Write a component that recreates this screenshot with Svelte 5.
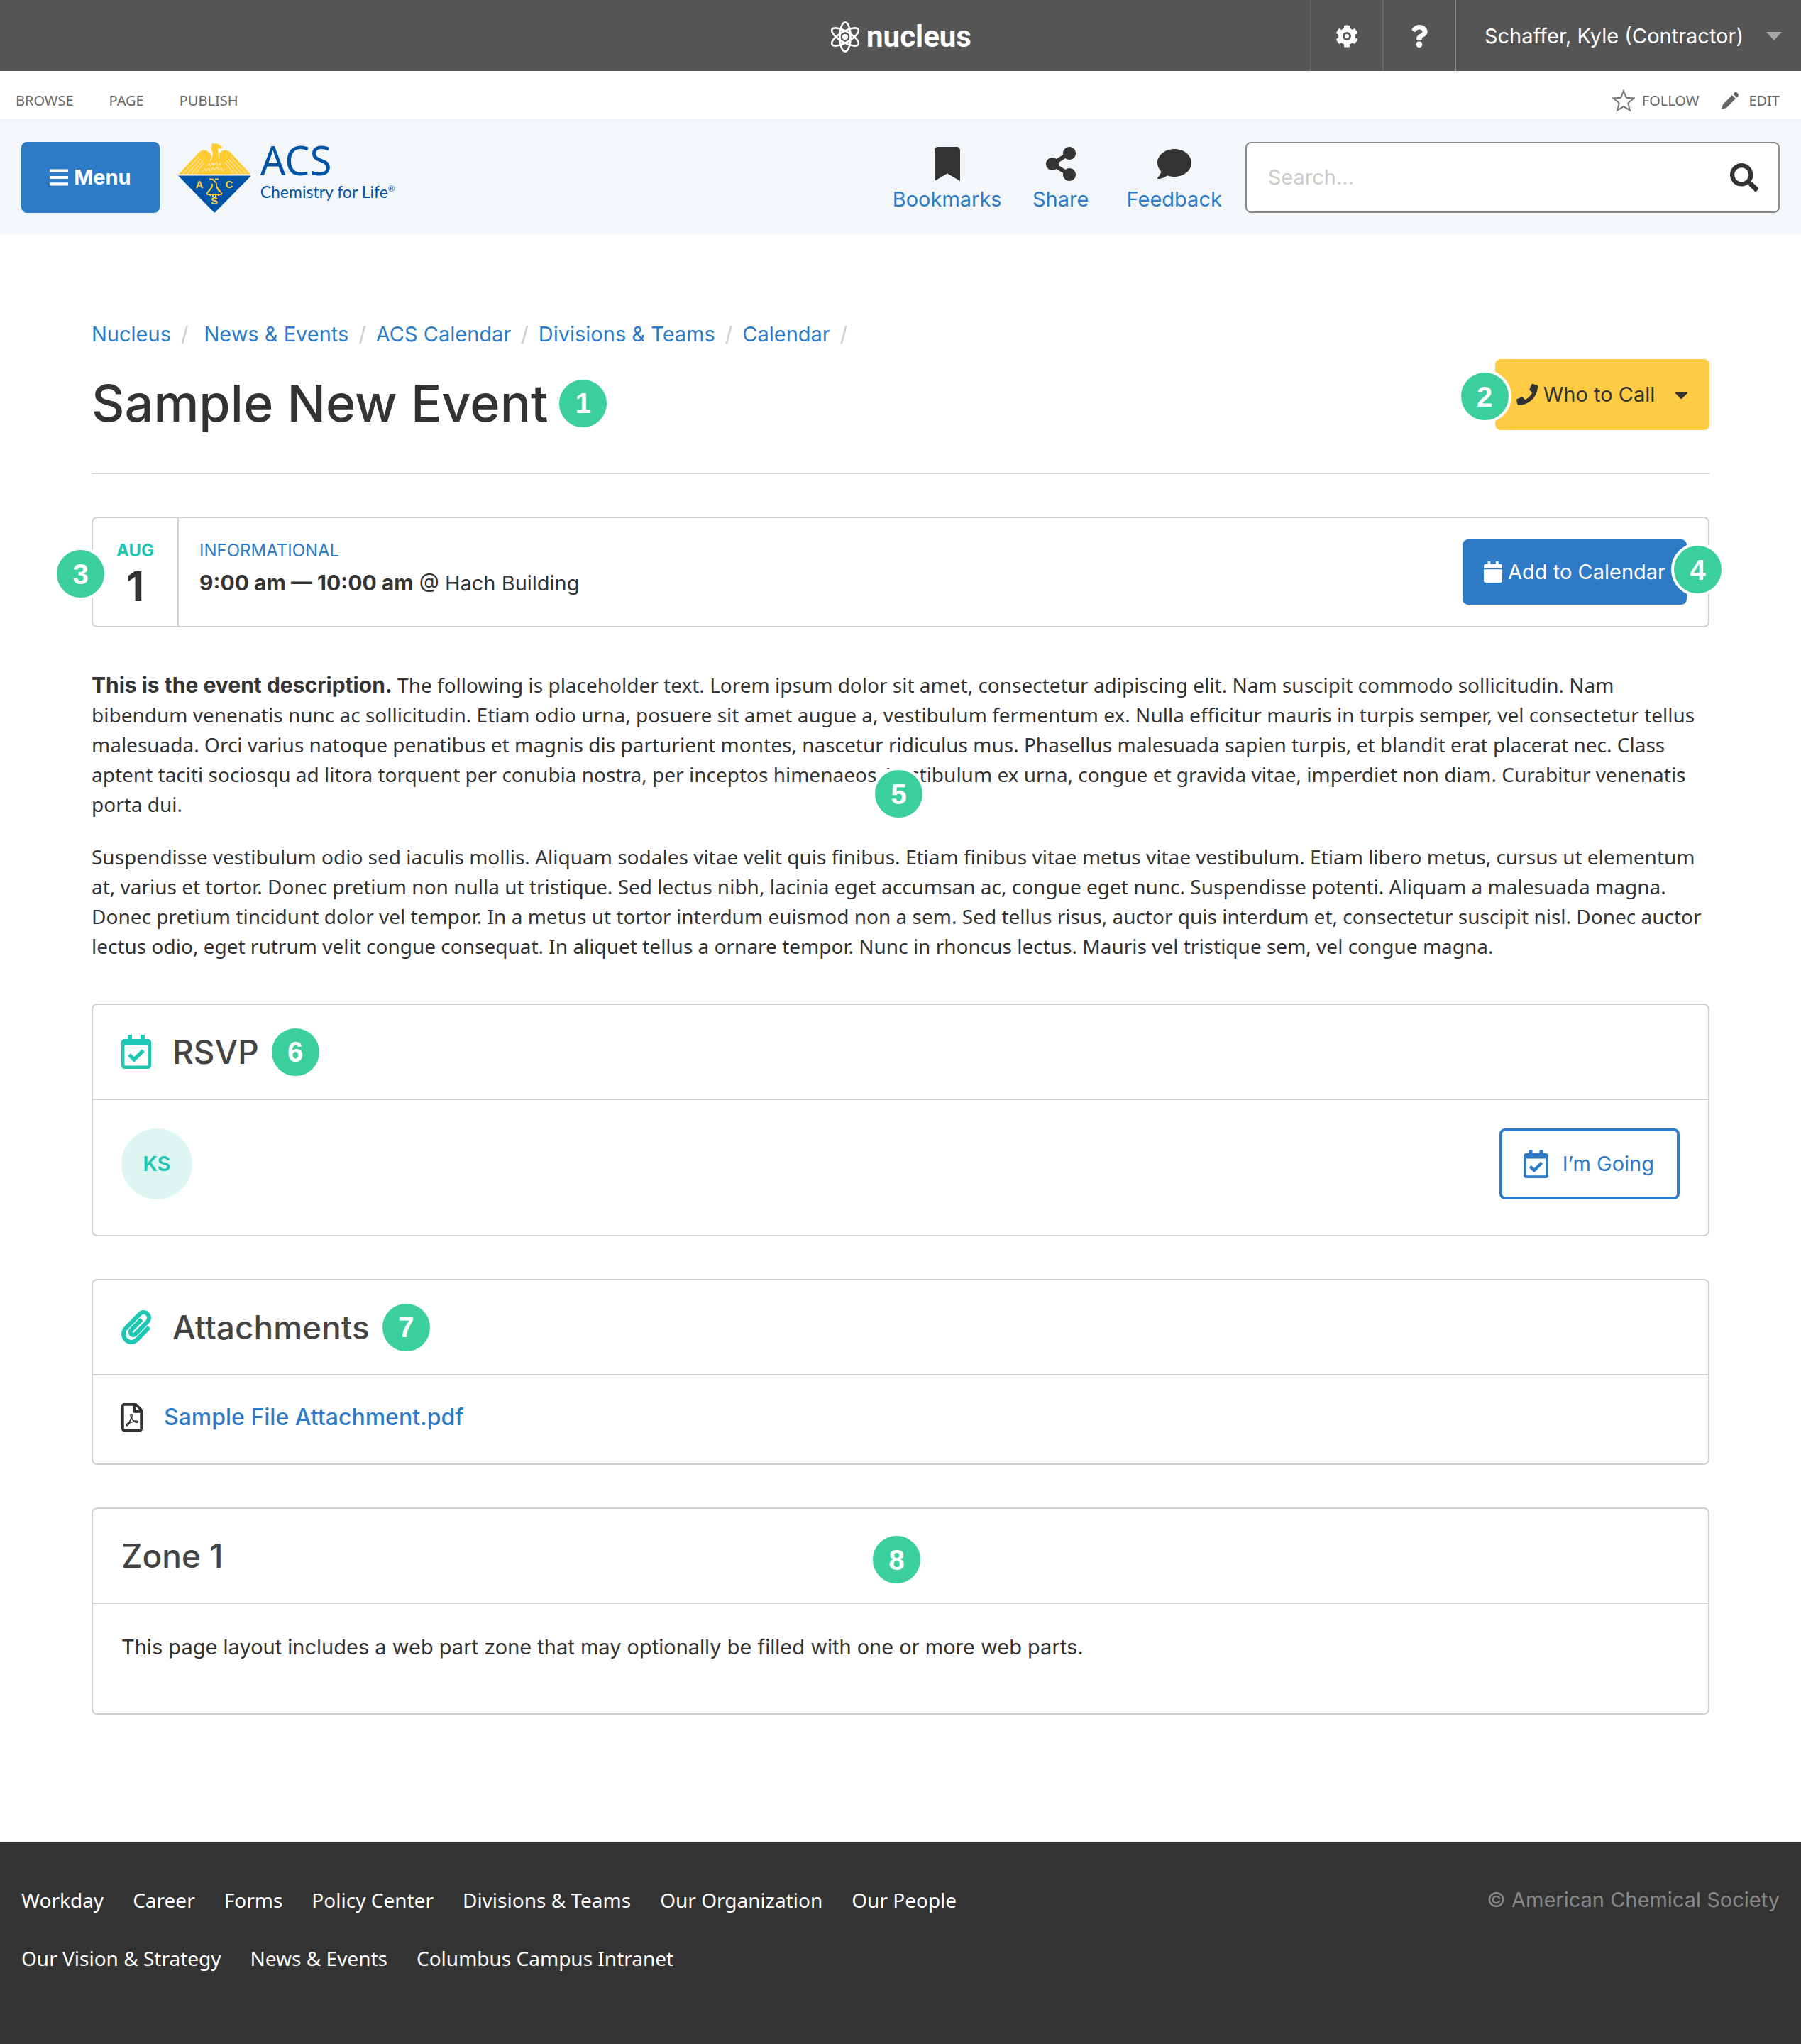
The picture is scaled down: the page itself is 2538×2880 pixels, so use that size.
<script>
  const ribbonTabs = ['Browse', 'Page', 'Publish'];

  const icons = {
    cog: { w: 512, d: 'M487.4 315.7l-42.6-24.6c4.3-23.2 4.3-47 0-70.2l42.6-24.6c4.9-2.8 7.1-8.6 5.5-14-11.1-35.6-30-67.8-54.7-94.6-3.8-4.1-10-5.1-14.8-2.3L380.8 110c-17.9-15.4-38.5-27.3-60.8-35.1V25.8c0-5.6-3.9-10.5-9.4-11.7-36.7-8.2-74.3-7.8-109.2 0-5.5 1.2-9.4 6.1-9.4 11.7V75c-22.2 7.9-42.8 19.8-60.8 35.1L88.7 85.5c-4.9-2.8-11-1.9-14.8 2.3-24.7 26.7-43.6 58.9-54.7 94.6-1.7 5.4.6 11.2 5.5 14L67.3 221c-4.3 23.2-4.3 47 0 70.2l-42.6 24.6c-4.9 2.8-7.1 8.6-5.5 14 11.1 35.6 30 67.8 54.7 94.6 3.8 4.1 10 5.1 14.8 2.3l42.6-24.6c17.9 15.4 38.5 27.3 60.8 35.1v49.2c0 5.6 3.9 10.5 9.4 11.7 36.7 8.2 74.3 7.8 109.2 0 5.5-1.2 9.4-6.1 9.4-11.7v-49.2c22.2-7.9 42.8-19.8 60.8-35.1l42.6 24.6c4.9 2.8 11 1.9 14.8-2.3 24.7-26.7 43.6-58.9 54.7-94.6 1.5-5.5-.7-11.3-5.6-14.1zM256 352a96 96 0 1 1 0-192 96 96 0 0 1 0 192zM256 208a48 48 0 1 0 0 96 48 48 0 0 0 0-96z' },
    question: { w: 384, d: 'M202.021 0C122.202 0 70.503 32.703 29.914 91.026c-7.363 10.58-5.093 25.086 5.178 32.874l43.138 32.709c10.373 7.865 25.132 6.026 33.253-4.148 25.049-31.381 43.63-49.449 82.757-49.449 30.764 0 68.816 19.799 68.816 49.631 0 22.552-18.617 34.134-48.993 51.164-35.423 19.86-82.299 44.576-82.299 106.405V320c0 13.255 10.745 24 24 24h72.471c13.255 0 24-10.745 24-24v-5.773c0-42.86 125.268-44.645 125.268-160.627C377.504 66.256 286.902 0 202.021 0zM192 373.459c-38.196 0-69.271 31.075-69.271 69.271 0 38.195 31.075 69.27 69.271 69.27s69.271-31.075 69.271-69.271-31.075-69.27-69.271-69.27z' },
    bars: { w: 448, d: 'M16 132h416c8.837 0 16-7.163 16-16V76c0-8.837-7.163-16-16-16H16C7.163 60 0 67.163 0 76v40c0 8.837 7.163 16 16 16zm0 160h416c8.837 0 16-7.163 16-16v-40c0-8.837-7.163-16-16-16H16c-8.837 0-16 7.163-16 16v40c0 8.837 7.163 16 16 16zm0 160h416c8.837 0 16-7.163 16-16v-40c0-8.837-7.163-16-16-16H16c-8.837 0-16 7.163-16 16v40c0 8.837 7.163 16 16 16z' },
    bookmark: { w: 384, d: 'M0 512V48C0 21.49 21.49 0 48 0h288c26.51 0 48 21.49 48 48v464L192 400 0 512z' },
    share: { w: 448, d: 'M352 320c-22.608 0-43.387 7.819-59.79 20.895l-102.486-64.054a96.551 96.551 0 0 0 0-41.683l102.486-64.054C308.613 184.181 329.392 192 352 192c53.019 0 96-42.981 96-96S405.019 0 352 0s-96 42.981-96 96c0 7.158.79 14.13 2.276 20.841L155.79 180.895C139.387 167.819 118.608 160 96 160c-53.019 0-96 42.981-96 96s42.981 96 96 96c22.608 0 43.387-7.819 59.79-20.895l102.486 64.054A96.301 96.301 0 0 0 256 416c0 53.019 42.981 96 96 96s96-42.981 96-96-42.981-96-96-96z' },
    comment: { w: 512, d: 'M256 32C114.6 32 0 125.1 0 240c0 49.6 21.4 95 57 130.7C44.5 421.1 2.7 466 2.2 466.5c-2.2 2.3-2.8 5.7-1.5 8.7S4.8 480 8 480c66.3 0 116-31.8 140.6-51.4 32.7 12.3 69 19.4 107.4 19.4 141.4 0 256-93.1 256-208S397.4 32 256 32z' },
    search: { w: 512, d: 'M505 442.7L405.3 343c-4.5-4.5-10.6-7-17-7H372c27.6-35.3 44-79.7 44-128C416 93.1 322.9 0 208 0S0 93.1 0 208s93.1 208 208 208c48.3 0 92.7-16.4 128-44v16.3c0 6.4 2.5 12.5 7 17l99.7 99.7c9.4 9.4 24.6 9.4 33.9 0l28.3-28.3c9.4-9.4 9.4-24.6.1-34zM208 336c-70.7 0-128-57.2-128-128 0-70.7 57.2-128 128-128 70.7 0 128 57.2 128 128 0 70.7-57.2 128-128 128z' },
    phone: { w: 512, d: 'M493.4 24.6l-104-24c-11.3-2.6-22.9 3.3-27.5 13.9l-48 112c-4.2 9.8-1.4 21.3 6.9 28l60.6 49.6c-36 76.7-98.9 140.5-177.2 177.2l-49.6-60.6c-6.8-8.3-18.2-11.1-28-6.9l-112 48C3.9 366.5-2 378.1.6 389.4l24 104C27.1 504.2 36.7 512 48 512c256.1 0 464-207.5 464-464 0-11.2-7.7-20.9-18.6-23.4z' },
    caret: { w: 320, d: 'M31.3 192h257.3c17.8 0 26.7 21.5 14.1 34.1L174.1 354.8c-7.8 7.8-20.5 7.8-28.3 0L17.2 226.1C4.6 213.5 13.5 192 31.3 192z' },
    calendar: { w: 448, d: 'M12 192h424c6.6 0 12 5.4 12 12v260c0 26.5-21.5 48-48 48H48c-26.5 0-48-21.5-48-48V204c0-6.6 5.4-12 12-12zm436-44v-36c0-26.5-21.5-48-48-48h-48V12c0-6.6-5.4-12-12-12h-40c-6.6 0-12 5.4-12 12v52H160V12c0-6.6-5.4-12-12-12h-40c-6.6 0-12 5.4-12 12v52H48C21.5 64 0 85.5 0 112v36c0 6.6 5.4 12 12 12h424c6.6 0 12-5.4 12-12z' },
    calendarCheck: { w: 448, d: 'M400 64h-48V12c0-6.627-5.373-12-12-12h-40c-6.627 0-12 5.373-12 12v52H160V12c0-6.627-5.373-12-12-12h-40c-6.627 0-12 5.373-12 12v52H48C21.49 64 0 85.49 0 112v352c0 26.51 21.49 48 48 48h352c26.51 0 48-21.49 48-48V112c0-26.51-21.49-48-48-48zm-6 400H54a6 6 0 0 1-6-6V160h352v298a6 6 0 0 1-6 6zm-52.849-200.65L198.842 404.519c-4.705 4.667-12.303 4.637-16.971-.068l-75.091-75.699c-4.667-4.705-4.637-12.303.068-16.971l22.719-22.536c4.705-4.667 12.303-4.637 16.97.069l44.104 44.461 111.072-110.181c4.705-4.667 12.303-4.637 16.971.068l22.536 22.718c4.667 4.705 4.636 12.303-.069 16.97z' },
    paperclip: { w: 448, d: 'M43.246 466.142c-58.43-60.289-57.341-157.511 1.386-217.581L254.392 34c44.316-45.332 116.351-45.336 160.671 0 43.89 44.894 43.943 117.329 0 162.276L232.214 383.128c-29.855 30.537-78.633 30.111-107.982-.998-28.275-29.97-27.368-77.473 1.452-106.953l143.743-146.835c6.182-6.314 16.312-6.422 22.626-.241l22.861 22.379c6.315 6.182 6.422 16.312.241 22.626L171.427 319.927c-4.932 5.045-5.236 13.428-.648 18.292 4.372 4.634 11.245 4.711 15.688.165l182.849-186.851c19.613-20.062 19.613-52.725-.011-72.798-19.189-19.627-49.957-19.637-69.154 0L90.39 293.295c-34.763 35.56-35.299 93.12-1.191 128.313 34.01 35.093 88.985 35.137 123.058.286l172.06-175.999c6.177-6.319 16.307-6.433 22.626-.256l22.877 22.364c6.319 6.177 6.434 16.307.256 22.626l-172.06 175.998c-59.576 60.938-155.943 60.216-214.77-.485z' },
    pdf: { w: 384, d: 'M369.9 97.9L286 14C277 5 264.8-.1 252.1-.1H48C21.5 0 0 21.5 0 48v416c0 26.5 21.5 48 48 48h288c26.5 0 48-21.5 48-48V131.9c0-12.7-5.1-25-14.1-34zM332.1 128H256V51.9l76.1 76.1zM48 464V48h160v104c0 13.3 10.7 24 24 24h104v288H48zm250.2-143.7c-12.2-12-47-8.7-64.4-6.5-17.2-10.5-28.7-25-36.8-46.3 3.9-16.1 10.1-40.6 5.4-56-4.2-26.2-37.8-23.6-42.6-5.9-4.4 16.1-.4 38.5 7 67.1-10 23.9-24.9 56-35.4 74.4-20 10.3-47 26.2-51 46.2-3.3 15.8 26 55.2 76.1-31.2 22.4-7.4 46.8-16.5 68.4-20.1 18.9 10.2 41 17 55.8 17 25.5 0 28-28.2 17.5-38.7zm-198.1 77.8c5.1-13.7 24.5-29.5 30.4-35-19 30.3-30.4 35.7-30.4 35zm81.6-190.6c7.4 0 6.7 32.1 1.8 40.8-4.4-13.9-4.3-40.8-1.8-40.8zm-24.4 136.6c9.7-16.9 18-37 24.7-54.7 8.3 15.1 18.9 27.2 30.1 35.5-20.8 4.3-38.9 13.1-54.8 19.2zm131.6-5s-5 6-37.3-7.8c35.1-2.6 40.9 5.4 37.3 7.8z' },
  };

  const tools = [
    { label: 'Bookmarks', icon: 'bookmark' },
    { label: 'Share', icon: 'share' },
    { label: 'Feedback', icon: 'comment' },
  ];

  const crumbs = ['Nucleus', 'News & Events', 'ACS Calendar', 'Divisions & Teams', 'Calendar'];

  const footerLinks = [
    'Workday',
    'Career',
    'Forms',
    'Policy Center',
    'Divisions & Teams',
    'Our Organization',
    'Our People',
    'Our Vision & Strategy',
    'News & Events',
    'Columbus Campus Intranet',
  ];
</script>

{#snippet icon(name, size)}
  <svg class="icon {size}" viewBox="0 0 {icons[name].w} 512" aria-hidden="true">
    <path fill="currentColor" d={icons[name].d} />
  </svg>
{/snippet}

<div class="page">
  <div class="suite-bar">
    <div class="suite-side"></div>
    <a class="brand" href="#home">
      <svg class="atom" viewBox="0 0 40 44" aria-hidden="true">
        <g fill="none" stroke="#fff" stroke-width="2.6">
          <ellipse cx="20" cy="22" rx="7.6" ry="20.6" />
          <ellipse cx="20" cy="22" rx="7.6" ry="21.4" transform="rotate(60 20 22)" />
          <ellipse cx="20" cy="22" rx="7.6" ry="21.4" transform="rotate(-60 20 22)" />
        </g>
        <circle cx="20" cy="22" r="4" fill="#fff" />
      </svg>
      <span>nucleus</span>
    </a>
    <div class="suite-side suite-actions">
      <button class="suite-button" aria-label="Settings">{@render icon('cog', 's32')}</button>
      <button class="suite-button" aria-label="Help">{@render icon('question', 's32')}</button>
      <button class="account">
        <span>Schaffer, Kyle (Contractor)</span>
        <svg class="account-caret" viewBox="0 0 22 12" aria-hidden="true"><path d="M0 0h22L11 12z" fill="#a6a6a6" /></svg>
      </button>
    </div>
  </div>

  <div class="ribbon">
    <nav class="ribbon-tabs" aria-label="Ribbon">
      {#each ribbonTabs as tab}
        <a href="#{tab.toLowerCase()}">{tab}</a>
      {/each}
    </nav>
    <div class="ribbon-actions">
      <button class="ribbon-button">
        <svg class="star" viewBox="0 0 32 32" aria-hidden="true">
          <path d="M16 2l3.9 9.8 10.5.7-8.1 6.8 2.6 10.3L16 24l-8.9 5.6 2.6-10.3-8.1-6.8 10.5-.7z" fill="none" stroke="#777" stroke-width="2" />
        </svg>
        Follow
      </button>
      <button class="ribbon-button">
        <svg class="pencil" viewBox="0 0 24 24" aria-hidden="true">
          <path d="M0 24l2-7L15 4l5 5L7 22zM16.500 2.500L19 0q2-.5 3.500 1T24 5l-2.500 2.500z" fill="#666" />
        </svg>
        Edit
      </button>
    </div>
  </div>

  <header class="site-header">
    <button class="menu-button">{@render icon('bars', 's30')}Menu</button>
    <a class="logo" href="#acs">
      <svg class="emblem" viewBox="6 6 102 100" aria-hidden="true">
        <g fill="#ffcb31">
          <path d="M7 51.500L35 21q5-5 11-3l5 4q3 4 3 9l-2 20.500z" />
          <path d="M108 51.500L80 21q-5-5-11-3l-5 4q-3 4-3 9l2 20.500z" />
          <path d="M54 7l2 2q5-2 8 1l4 3-1 3-4-1q-2 2 0 6 2 5 1 11l3 5 10 14.500H36L48 35l5-6q2-4 2-8-3-4-2-7z" />
        </g>
        <g stroke="#f3f7fa" stroke-width="0.900" fill="none">
          <path d="M13 51l22-24M19 51l19-21M25 51l16-19M31 50l12-15M102 51L80 27M96 51L77 30M90 51L74 32M84 50L72 35" />
          <path d="M51 21q4 5 0 12M64 21q-2 3 0 8" />
          <path d="M47 40l3-4 1 4 4-5 1 4 4-5 1 5 4-3 1 3M40 48l4-4 1 3 4-4 2 4 4-5 2 4 4-5 2 5 4-3 2 4 3-3" />
        </g>
        <path d="M6 53.500H109L57.300 106z" fill="#0054a6" />
        <g fill="none" stroke="#ffcb31" stroke-width="1.800">
          <path d="M50 58.500h5M58 58.500h5M54 58l6 6M54 65v4l-7 9q-1 2 1 2h18q2 0 1-2l-7-9v-5" />
          <path d="M49 76l5-7M64 76l-4-7" />
        </g>
        <path d="M49 80h17M51 82v-3M55 83v-3M59 83v-3M63 82v-3" stroke="#ffcb31" stroke-width="2" />
        <g fill="#ffcb31" class="emblem-letters">
          <text x="36" y="71">A</text>
          <text x="78" y="71">C</text>
          <text x="57" y="94">S</text>
        </g>
      </svg>
      <span class="logo-text">
        <span class="logo-name">ACS</span>
        <span class="logo-tagline">Chemistry for Life<sup>®</sup></span>
      </span>
    </a>
    <nav class="tools" aria-label="Tools">
      {#each tools as tool}
        <a href="#{tool.label.toLowerCase()}">
          {@render icon(tool.icon, 's48')}
          <span>{tool.label}</span>
        </a>
      {/each}
    </nav>
    <form class="search">
      <input type="search" placeholder="Search..." aria-label="Search" />
      <button type="button" aria-label="Run search">{@render icon('search', 's40')}</button>
    </form>
  </header>

  <main>
    <nav class="crumbs" aria-label="Breadcrumb">
      {#each crumbs as crumb}
        <a href="#crumb">{crumb}</a><span class="slash">/</span>
      {/each}
    </nav>

    <div class="title-row">
      <div class="title">
        <h1>Sample New Event</h1>
        <span class="badge">1</span>
      </div>
      <button class="call-button">
        {@render icon('phone', 's30')}
        <span>Who to Call</span>
        {@render icon('caret', 's30')}
        <span class="badge badge-call">2</span>
      </button>
    </div>

    <section class="event">
      <div class="date">
        <span class="month">Aug</span>
        <span class="day">1</span>
      </div>
      <div class="details">
        <span class="kind">Informational</span>
        <span><strong>9:00 am — 10:00 am</strong> @ Hach Building</span>
      </div>
      <button class="add-button">{@render icon('calendar', 's30')}Add to Calendar</button>
      <span class="badge badge-date">3</span>
      <span class="badge badge-add">4</span>
    </section>

    <div class="description">
      <p>
        <strong>This is the event description.</strong> The following is placeholder text. Lorem ipsum dolor sit amet, consectetur adipiscing elit. Nam suscipit commodo sollicitudin. Nam bibendum venenatis nunc ac sollicitudin. Etiam odio urna, posuere sit amet augue a, vestibulum fermentum ex. Nulla efficitur mauris in turpis semper, vel consectetur tellus malesuada. Orci varius natoque penatibus et magnis dis parturient montes, nascetur ridiculus mus. Phasellus malesuada sapien turpis, et blandit erat placerat nec. Class aptent taciti sociosqu ad litora torquent per conubia nostra, per inceptos himenaeos. Vestibulum ex urna, congue et gravida vitae, imperdiet non diam. Curabitur venenatis porta dui.
      </p>
      <p>
        Suspendisse vestibulum odio sed iaculis mollis. Aliquam sodales vitae velit quis finibus. Etiam finibus vitae metus vitae vestibulum. Etiam libero metus, cursus ut elementum at, varius et tortor. Donec pretium non nulla ut tristique. Sed lectus nibh, lacinia eget accumsan ac, congue eget nunc. Suspendisse potenti. Aliquam a malesuada magna. Donec pretium tincidunt dolor vel tempor. In a metus ut tortor interdum euismod non a sem. Sed tellus risus, auctor quis interdum et, consectetur suscipit nisl. Donec auctor lectus odio, eget rutrum velit congue consequat. In aliquet tellus a ornare tempor. Nunc in rhoncus lectus. Mauris vel tristique sem, vel congue magna.
      </p>
      <span class="badge badge-description">5</span>
    </div>

    <section class="panel">
      <div class="panel-head">
        {@render icon('calendarCheck', 's48 teal')}
        <h2>RSVP</h2>
        <span class="badge">6</span>
      </div>
      <div class="panel-body rsvp">
        <span class="avatar">KS</span>
        <button class="going-button">{@render icon('calendarCheck', 's40')}I’m Going</button>
      </div>
    </section>

    <section class="panel">
      <div class="panel-head">
        {@render icon('paperclip', 's48 teal')}
        <h2>Attachments</h2>
        <span class="badge">7</span>
      </div>
      <div class="panel-body file">
        {@render icon('pdf', 's40')}
        <a href="#attachment">Sample File Attachment.pdf</a>
      </div>
    </section>

    <section class="panel">
      <div class="panel-head">
        <h2>Zone 1</h2>
        <span class="badge badge-zone">8</span>
      </div>
      <div class="panel-body">
        <p class="zone-text">This page layout includes a web part zone that may optionally be filled with one or more web parts.</p>
      </div>
    </section>
  </main>

  <footer>
    <nav class="footer-links" aria-label="Footer">
      {#each footerLinks as link}
        <a href="#footer">{link}</a>
      {/each}
    </nav>
    <span class="copyright">© American Chemical Society</span>
  </footer>
</div>

<style>
  :global(body) {
    margin: 0;
    background: #fff;
  }

  .page {
    font-family: Inter, 'Liberation Sans', sans-serif;
    font-size: 29px;
    line-height: 42px;
    color: #333;
  }

  .page :global(*) {
    box-sizing: border-box;
  }

  a {
    color: #2d7bc6;
    text-decoration: none;
  }

  button {
    font: inherit;
    color: inherit;
    border: 0;
    padding: 0;
    background: none;
    cursor: pointer;
    white-space: nowrap;
  }

  h1,
  h2,
  p {
    margin: 0;
  }

  strong {
    font-family: Inter, 'Liberation Sans', sans-serif;
    font-size: 30px;
  }

  .icon {
    display: block;
    flex: none;
    width: auto;
  }

  .s30 {
    height: 30px;
  }

  .s32 {
    height: 32px;
  }

  .s40 {
    height: 40px;
  }

  .s48 {
    height: 48px;
  }

  .teal {
    color: #1cc8b4;
  }

  .badge {
    display: flex;
    align-items: center;
    justify-content: center;
    flex: none;
    width: 75px;
    height: 75px;
    border: 4px solid #fff;
    border-radius: 50%;
    background: #3ccf9e;
    color: #fff;
    font-family: 'Liberation Sans', sans-serif;
    font-size: 40px;
    font-weight: 700;
    line-height: 40px;
  }

  .suite-bar {
    display: flex;
    min-height: 100px;
    background: #555;
    color: #fff;
  }

  .suite-side {
    flex: 1 1 0;
  }

  .brand {
    display: flex;
    align-items: center;
    gap: 10px;
    padding: 4px 0 0 2px;
    color: #fff;
    font-family: Roboto, sans-serif;
    font-size: 42px;
    font-weight: 700;
  }

  .atom {
    width: 40px;
    height: 44px;
  }

  .suite-actions {
    display: flex;
    justify-content: flex-end;
  }

  .suite-button {
    display: grid;
    place-items: center;
    width: 102px;
    padding-top: 2px;
    border-left: 2px solid #666;
  }

  .account {
    display: flex;
    align-items: center;
    gap: 32px;
    padding: 2px 27px 0 40px;
    border-left: 2px solid #888;
  }

  .account-caret {
    width: 22px;
    height: 12px;
  }

  .ribbon {
    display: flex;
    justify-content: space-between;
    padding: 22px 30px 6px 22px;
    border-bottom: 2px solid #f3f3f3;
    color: #666;
    font-family: 'Noto Sans', sans-serif;
    font-size: 20px;
    line-height: 40px;
    text-transform: uppercase;
  }

  .ribbon a {
    color: inherit;
  }

  .ribbon-tabs {
    display: flex;
    gap: 50px;
  }

  .ribbon-actions {
    display: flex;
    gap: 32px;
  }

  .ribbon-button {
    display: flex;
    align-items: center;
    gap: 10px;
    text-transform: inherit;
  }

  .star {
    width: 32px;
    height: 32px;
  }

  .pencil {
    width: 24px;
    height: 24px;
    margin-right: 4px;
  }

  .site-header {
    display: flex;
    align-items: center;
    padding: 30px;
    background: #f3f7fa;
  }

  .menu-button {
    display: flex;
    align-items: center;
    justify-content: center;
    gap: 8px;
    height: 100px;
    padding: 0 40px;
    border-radius: 8px;
    background: #2d7bc6;
    color: #fff;
    font-weight: 700;
  }

  .logo {
    display: flex;
    align-items: flex-start;
    gap: 14px;
    margin-left: 26px;
    margin-right: auto;
    color: #0054a6;
  }

  .emblem {
    width: 102px;
    height: 100px;
  }

  .emblem-letters {
    font-family: 'Liberation Sans', sans-serif;
    font-size: 15px;
    font-weight: 700;
    text-anchor: middle;
  }

  .logo-text {
    display: flex;
    flex-direction: column;
    font-family: 'Noto Sans', sans-serif;
  }

  .logo-name {
    font-size: 56px;
    line-height: 50px;
  }

  .logo-tagline {
    font-family: Lato, sans-serif;
    font-size: 23px;
    line-height: 40px;
  }

  .logo-tagline sup {
    font-size: 12px;
    line-height: 0;
  }

  .tools {
    display: grid;
    grid-template-columns: repeat(3, 160px);
    margin-right: 20px;
    padding-top: 6px;
    line-height: 36px;
  }

  .tools a {
    display: flex;
    flex-direction: column;
    align-items: center;
    gap: 8px;
  }

  .tools a :global(svg) {
    color: #333;
  }

  .search {
    display: flex;
    align-items: center;
    width: 30.4%;
    height: 100px;
    padding: 0 28px 0 30px;
    border: 2px solid #888;
    border-radius: 8px;
    background: #fff;
  }

  .search input {
    flex: 1;
    min-width: 0;
    padding: 0;
    border: 0;
    outline: 0;
    background: none;
    color: #333;
    font: inherit;
  }

  .search input::placeholder {
    color: #ccc;
    opacity: 1;
  }

  main {
    max-width: 2280px;
    margin: 0 auto;
    padding: 120px 0 180px;
  }

  .crumbs {
    display: flex;
    gap: 14px;
    margin-bottom: 14px;
  }

  .slash {
    color: #ccc;
  }

  .slash:first-of-type {
    margin-right: 8px;
  }

  .title-row {
    display: flex;
    justify-content: space-between;
    padding-bottom: 60px;
    border-bottom: 2px solid #d0d0d0;
  }

  .title {
    display: flex;
    align-items: center;
    gap: 12px;
    height: 100px;
    padding-top: 24px;
  }

  h1 {
    font-size: 72px;
    font-weight: 500;
    line-height: 88px;
  }

  .call-button {
    position: relative;
    display: flex;
    align-items: center;
    gap: 8px;
    height: 100px;
    padding: 0 30px;
    border-radius: 8px;
    background: #fecb45;
  }

  .call-button :global(.icon:nth-of-type(2)) {
    margin-left: 20px;
  }

  .badge-call {
    position: absolute;
    top: 15px;
    left: -52px;
  }

  .event {
    position: relative;
    display: flex;
    align-items: center;
    min-height: 156px;
    margin-top: 60px;
    padding-right: 30px;
    border: 2px solid #d0d0d0;
    border-radius: 8px;
  }

  .date {
    display: flex;
    flex-direction: column;
    align-items: center;
    justify-content: center;
    align-self: stretch;
    width: 121px;
    border-right: 2px solid #d0d0d0;
    font-weight: 700;
  }

  .month {
    color: #1cc8b4;
    font-size: 24px;
    line-height: 40px;
    text-transform: uppercase;
  }

  .day {
    font-size: 58px;
    line-height: 60px;
  }

  .details {
    display: flex;
    flex: 1;
    flex-direction: column;
    padding: 0 0 18px 29px;
  }

  .kind {
    color: #2d7bc6;
    font-size: 24px;
    line-height: 48px;
    text-transform: uppercase;
  }

  .add-button {
    display: flex;
    align-items: center;
    gap: 8px;
    height: 92px;
    padding: 0 30px;
    border-radius: 8px;
    background: #2d7bc6;
    color: #fff;
  }

  .badge-date {
    position: absolute;
    top: 41px;
    left: -55px;
  }

  .badge-add {
    position: absolute;
    top: 35px;
    right: -23px;
  }

  .description {
    position: relative;
    margin: 60px 0;
    font-family: 'Noto Sans', sans-serif;
    font-size: 28px;
  }

  .description p + p {
    margin-top: 32px;
  }

  .badge-description {
    position: absolute;
    top: 137px;
    left: calc(50% - 40px);
  }

  .panel {
    border: 2px solid #d0d0d0;
    border-radius: 8px;
  }

  .panel + .panel {
    margin-top: 60px;
  }

  .panel-head {
    position: relative;
    display: flex;
    align-items: center;
    min-height: 134px;
    padding: 0 40px;
    border-bottom: 2px solid #d0d0d0;
  }

  .panel-head :global(.icon) {
    margin-right: 30px;
  }

  h2 {
    margin-right: 14px;
    color: #444;
    font-size: 46px;
    font-weight: 500;
    line-height: 60px;
  }

  .badge-zone {
    position: absolute;
    top: 34px;
    left: calc(50% - 43px);
  }

  .panel-body {
    padding: 40px;
  }

  .rsvp {
    display: flex;
    align-items: center;
    justify-content: space-between;
    padding-bottom: 50px;
  }

  .avatar {
    display: grid;
    place-items: center;
    width: 100px;
    height: 100px;
    border-radius: 50%;
    background: #ddf6f2;
    color: #1cc8b4;
    font-weight: 600;
  }

  .going-button {
    display: flex;
    align-items: center;
    gap: 20px;
    height: 100px;
    padding: 0 32px 0 30px;
    border: 4px solid #2d7bc6;
    border-radius: 8px;
    color: #2d7bc6;
  }

  .file {
    display: flex;
    align-items: center;
    gap: 30px;
    padding-top: 38px;
    padding-bottom: 44px;
    font-size: 32px;
    font-weight: 500;
  }

  .zone-text {
    margin-bottom: 32px;
  }

  footer {
    display: flex;
    justify-content: space-between;
    padding: 60px 30px 100px;
    background: #333;
    font-family: 'Noto Sans', sans-serif;
    font-size: 28px;
  }

  .footer-links {
    display: flex;
    flex-wrap: wrap;
    gap: 40px 41px;
    width: 60%;
  }

  .footer-links a {
    color: #fff;
  }

  .copyright {
    color: #888;
    font-family: Inter, sans-serif;
    font-size: 29px;
  }
</style>
